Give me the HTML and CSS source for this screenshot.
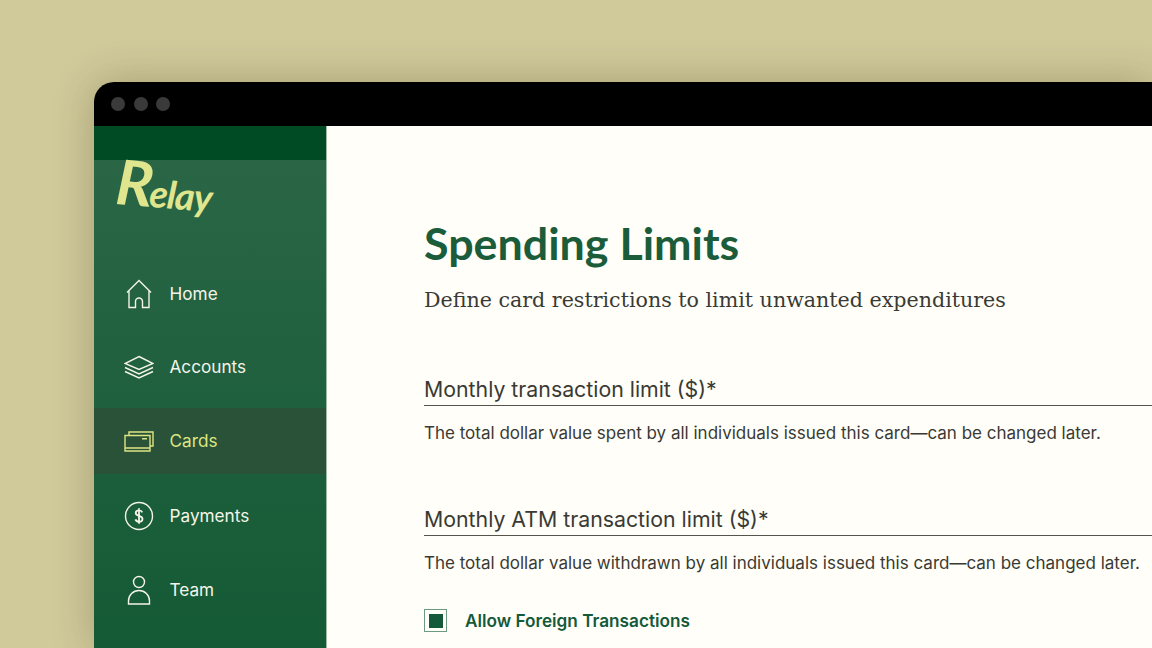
FILE: index.html
```html
<!DOCTYPE html>
<html lang="en">
<head>
    <meta charset="UTF-8">
    <title>Relay - Spending Limits</title>
    <link rel="stylesheet" href="styles.css">
</head>
<body>
    <div class="window">
        <div class="titlebar">
            <span class="dot"></span>
            <span class="dot"></span>
            <span class="dot"></span>
        </div>
        <div class="app">
            <div class="sidebar">
                <div class="sidebar-top"></div>
                <div class="logo"><span class="logo-text"><span class="logo-cap">R</span>elay</span></div>
                <nav class="nav">
                    <a class="nav-item">
                        <svg class="nav-icon" viewBox="0 0 30 30"><path d="M3 13.500 15 1.500l12 12M5 11.500v17h6.500v-6a3.500 3.500 0 0 1 7 0v6H25v-17"/></svg>
                        Home
                    </a>
                    <a class="nav-item">
                        <svg class="nav-icon" viewBox="0 0 30 30"><path d="M15 4.500 29 11.500 15 17.500 1 11.500ZM1 15.500l14 6.500 14-6.500M1 19.500l14 6.500 14-6.500"/></svg>
                        Accounts
                    </a>
                    <a class="nav-item active">
                        <svg class="nav-icon" viewBox="0 0 30 30"><path d="M1 9.500h25v15.500H1ZM1 22h25M18 12.700h5M5 9.500V6h24v14h-3"/></svg>
                        Cards
                    </a>
                    <a class="nav-item">
                        <svg class="nav-icon" viewBox="0 0 30 30"><circle cx="15" cy="15" r="13.500"/><path class="thick" d="M18.300 11.300c-.6-1.400-1.800-2-3.300-2-1.900 0-3.300 1-3.300 2.700 0 3.700 6.800 2.100 6.800 5.900 0 1.800-1.500 2.800-3.500 2.800-1.700 0-3-.8-3.600-2.300M15 7.300v15.400"/></svg>
                        Payments
                    </a>
                    <a class="nav-item">
                        <svg class="nav-icon" viewBox="0 0 30 30"><circle cx="15" cy="7" r="5.500"/><path d="M4.500 29v-3a10.500 10.500 0 0 1 21 0v3Z"/></svg>
                        Team
                    </a>
                </nav>
            </div>
            <div class="main">
                <h1>Spending Limits</h1>
                <p class="subtitle">Define card restrictions to limit unwanted expenditures</p>

                <div class="field first">
                    <div class="field-label">Monthly transaction limit ($)*</div>
                    <div class="field-help">The total dollar value spent by all individuals issued this card—can be changed later.</div>
                </div>

                <div class="field">
                    <div class="field-label">Monthly ATM transaction limit ($)*</div>
                    <div class="field-help">The total dollar value withdrawn by all individuals issued this card—can be changed later.</div>
                </div>

                <div class="check-row">
                    <span class="checkbox"><span class="checkbox-fill"></span></span>
                    <span class="check-label">Allow Foreign Transactions</span>
                </div>
            </div>
        </div>
    </div>
</body>
</html>
```

FILE: styles.css
```css
html, body {
    margin: 0;
    height: 648px;
    overflow: hidden;
}
body {
    background: #d0c99a;
    padding: 82px 0 0 94px;
    box-sizing: border-box;
    display: flex;
    font-family: "Inter", "Liberation Sans", sans-serif;
}
.window {
    flex: 1;
    min-width: 0;
    display: flex;
    flex-direction: column;
    border-radius: 20px 0 0 0;
    overflow: hidden;
    box-shadow: 0 0 40px rgba(50, 45, 15, 0.28);
}
.titlebar {
    background: #000;
    height: 44px;
    display: flex;
    align-items: center;
    gap: 8.500px;
    padding-left: 17px;
    flex-shrink: 0;
}
.dot {
    width: 14px;
    height: 14px;
    border-radius: 50%;
    background: #3a3a3a;
}
.app {
    flex: 1;
    display: flex;
    min-height: 0;
}
.sidebar {
    width: 233px;
    flex-shrink: 0;
    background: linear-gradient(180deg, #2a6646 34px, #145a35 100%);
    border-right: 1px solid #9fbaa6;
    box-sizing: border-box;
}
.sidebar-top {
    height: 34px;
    background: #004b23;
}
.logo {
    height: 100.600px;
    padding: 4px 0 0 22px;
    box-sizing: border-box;
}
.logo-text {
    display: inline-block;
    color: #e0e68e;
    font-family: "Lato", sans-serif;
    font-size: 38px;
    font-weight: 700;
    font-style: italic;
    line-height: 40px;
    letter-spacing: -1px;
    transform: rotate(5deg);
}
.logo-cap {
    font-size: 62px;
    letter-spacing: -3px;
}
.nav {
    display: flex;
    flex-direction: column;
}
.nav-item {
    height: 66px;
    margin-bottom: 8px;
    display: flex;
    align-items: center;
    gap: 15.500px;
    padding-left: 30px;
    color: #f4f4e8;
    font-size: 17.200px;
    font-weight: 400;
}
.nav-item:first-child {
    margin-bottom: 7px;
}
.nav-item.active {
    margin-bottom: 9px;
    background: #2a5239;
    color: #dde583;
}
.nav-icon {
    width: 30px;
    height: 30px;
    fill: none;
    stroke: currentColor;
    stroke-width: 1.400;
}
.nav-icon .thick {
    stroke-width: 1.800;
}
.main {
    flex: 1;
    min-width: 0;
    background: #fffef8;
    padding: 90px 0 0 97px;
    color: #3a3a34;
}
h1 {
    margin: 0;
    color: #1b5c3b;
    font-family: "Lato", sans-serif;
    font-size: 44.800px;
    font-weight: 700;
    line-height: 54px;
}
.subtitle {
    margin: 14px 0 0;
    font-family: "DejaVu Serif", serif;
    font-size: 20.600px;
    line-height: 32px;
}
.field {
    margin-top: 58px;
}
.field.first {
    margin-top: 57px;
}
.field-label {
    font-size: 21.300px;
    line-height: 32px;
    border-bottom: 1px solid #55554e;
    height: 32px;
    white-space: nowrap;
}
.field-help {
    margin-top: 15px;
    font-size: 17px;
    line-height: 24px;
    white-space: nowrap;
}
.check-row {
    margin-top: 34px;
    display: flex;
    align-items: center;
    gap: 18px;
}
.checkbox {
    width: 23px;
    height: 23px;
    box-sizing: border-box;
    border: 1.500px solid #6b9a80;
    display: flex;
    align-items: center;
    justify-content: center;
}
.checkbox-fill {
    width: 14px;
    height: 14px;
    background: #14593a;
}
.check-label {
    color: #14593a;
    font-size: 17.200px;
    font-weight: 600;
}
```
